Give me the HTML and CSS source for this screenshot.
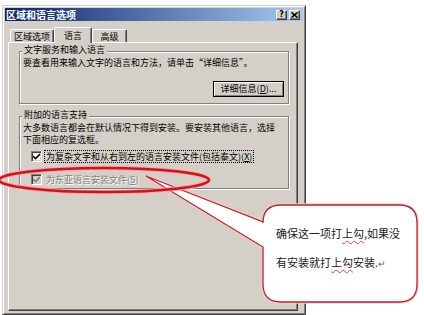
FILE: index.html
```html
<!DOCTYPE html>
<html lang="zh-CN">
<head>
    <meta charset="UTF-8">
    <title>区域和语言选项</title>
    <link rel="stylesheet" href="styles.css">
</head>
<body>
    <div class="dialog">
        <div class="titlebar">
            <span class="title">区域和语言选项</span>
            <div class="caption-btns">
                <span class="cap-btn">?</span>
                <span class="cap-btn">
                    <svg width="7" height="6" viewBox="0 0 7 6">
                        <path d="M0.5 0.5 L6.5 5.5 M6.5 0.5 L0.5 5.5" stroke="#000" stroke-width="1.6"/>
                    </svg>
                </span>
            </div>
        </div>

        <div class="tabs">
            <div class="tab">区域选项</div>
            <div class="tab active">语言</div>
            <div class="tab">高级</div>
        </div>

        <div class="panel">
            <div class="group group-services">
                <div class="group-title">文字服务和输入语言</div>
                <p class="desc">要查看用来输入文字的语言和方法，请单击“详细信息”。</p>
                <div class="btn-row">
                    <button class="btn">详细信息(<u>D</u>)...</button>
                </div>
            </div>

            <div class="group group-extra">
                <div class="group-title">附加的语言支持</div>
                <p class="desc">大多数语言都会在默认情况下得到安装。要安装其他语言，选择<br>下面相应的复选框。</p>
                <div class="check">
                    <span class="box">
                        <svg width="7" height="7" viewBox="0 0 7 7"><path d="M0 3 L2.5 5.5 L7 1" fill="none" stroke="#000" stroke-width="1.6"/></svg>
                    </span>
                    <span class="label focus">为复杂文字和从右到左的语言安装文件(包括泰文)(<u>X</u>)</span>
                </div>
                <div class="check disabled">
                    <span class="box">
                        <svg width="7" height="7" viewBox="0 0 7 7"><path d="M0 3 L2.5 5.5 L7 1" fill="none" stroke="#808080" stroke-width="1.6"/></svg>
                    </span>
                    <span class="label">为东亚语言安装文件(<u>S</u>)</span>
                </div>
            </div>
        </div>
    </div>

    <!-- red marks drawn on top of the screenshot -->
    <svg class="annotations" width="424" height="315" viewBox="0 0 424 315">
        <path class="callout-halo" d="M281 205 H399 Q417 205 417 223 V284 Q417 302 399 302 H281 Q263 302 263 284 V247 L146 176 L263 222 V223 Q263 205 281 205 Z"/>
        <path class="callout" d="M281 205 H399 Q417 205 417 223 V284 Q417 302 399 302 H281 Q263 302 263 284 V247 L146 176 L263 222 V223 Q263 205 281 205 Z"/>
        <ellipse class="ring-halo" cx="104" cy="180" rx="105" ry="12"/>
        <ellipse class="ring" cx="104" cy="180" rx="105" ry="12"/>
    </svg>
    <div class="callout-text">
        确保这一项打<span class="spell">上勾</span>,如果没<br>
        有安装就打<span class="spell">上勾</span>安装.<span class="ret">↵</span>
    </div>
</body>
</html>
```

FILE: styles.css
```css
* {
    box-sizing: border-box;
}

body {
    margin: 0;
    height: 315px;
    overflow: hidden;
    position: relative;
    background: #fff;
    font-family: "Noto Sans CJK SC", "Noto Sans", sans-serif;
    font-size: 9px;
    color: #000;
}

.dialog {
    margin: 5px 0 0 2px;
    width: 304px;
    height: 310px;
    padding: 2px;
    background: #d4d0c8;
    border: 1px solid;
    border-color: #d4d0c8 #404040 #404040 #d4d0c8;
    box-shadow: inset 1px 1px #fff, inset -1px -1px #808080;
}

.titlebar {
    height: 13px;
    display: flex;
    align-items: center;
    justify-content: space-between;
    padding: 0 3px 0 1px;
    background: linear-gradient(to right, #0a246a, #a6caf0);
    color: #fff;
    font-size: 10px;
    font-weight: bold;
    line-height: 13px;
}

.caption-btns {
    display: flex;
    gap: 2px;
}

.cap-btn {
    width: 11px;
    height: 10px;
    display: flex;
    align-items: center;
    justify-content: center;
    background: #d4d0c8;
    border: 1px solid;
    border-color: #fff #404040 #404040 #fff;
    box-shadow: inset -1px -1px #808080;
    color: #000;
    font-family: "DejaVu Sans", sans-serif;
    font-size: 8px;
    font-weight: bold;
    line-height: 8px;
}

.tabs {
    display: flex;
    align-items: flex-end;
    height: 21px;
    padding-left: 5px;
    position: relative;
    z-index: 1;
}

.tab {
    height: 13px;
    padding-top: 1px;
    text-align: center;
    line-height: 11px;
    background: #d4d0c8;
    border: 1px solid;
    border-bottom: none;
    border-color: #fff #404040 #404040 #fff;
    box-shadow: inset -1px 0 #808080;
    border-radius: 2px 2px 0 0;
}

.tab:nth-child(1) { width: 44px; }
.tab:nth-child(2) { width: 38px; }
.tab:nth-child(3) { width: 35px; }

.tab.active {
    height: 16px;
    margin-bottom: -1px;
    padding-top: 2px;
}

.panel {
    margin-left: 3px;
    width: 290px;
    height: 269px;
    padding: 8px 8px 0 10px;
    border: 1px solid;
    border-color: #fff #404040 #404040 #fff;
    box-shadow: inset -1px -1px #808080;
}

.group {
    border: 1px solid #808080;
    box-shadow: inset 1px 1px #fff, 1px 1px #fff;
    padding: 0 4px 6px 3px;
}

.group-title {
    display: table;
    margin: -8px 0 0 -1px;
    padding: 0 2px;
    background: #d4d0c8;
    line-height: 11px;
}

.desc {
    margin: 2px 0 0;
    line-height: 12px;
}

.btn-row {
    display: flex;
    justify-content: flex-end;
    margin-top: 12px;
}

.btn {
    width: 71px;
    height: 16px;
    padding: 0;
    background: #d4d0c8;
    border: 1px solid #000;
    box-shadow: inset 1px 1px #fff, inset -1px -1px #808080;
    font-family: inherit;
    font-size: 9px;
    line-height: 12px;
    color: #000;
}

.group-extra {
    margin-top: 12px;
    padding-bottom: 2px;
}

.check {
    display: flex;
    align-items: center;
    height: 13px;
    margin: 4px 0 0 8px;
}

.check.disabled {
    margin-top: 10px;
}

.box {
    width: 11px;
    height: 11px;
    display: flex;
    align-items: center;
    justify-content: center;
    background: #fff;
    border: 1px solid;
    border-color: #808080 #fff #fff #808080;
    box-shadow: inset 1px 1px #404040, inset -1px -1px #d4d0c8;
}

.check.disabled .box {
    background: #d4d0c8;
}

.label {
    margin-left: 3px;
    padding: 0 1px;
    line-height: 11px;
}

.label.focus {
    outline: 1px dotted #000;
}

.check.disabled .label {
    color: #808080;
    text-shadow: 1px 1px #fff;
}

.annotations {
    position: absolute;
    top: 0;
    left: 0;
    pointer-events: none;
}

.callout-halo {
    fill: none;
    stroke: #f4caca;
    stroke-width: 3.5;
}

.callout {
    fill: #fff;
    stroke: #b8262c;
    stroke-width: 1.3;
}

.ring-halo {
    fill: none;
    stroke: #f0a8a8;
    stroke-width: 4.5;
}

.ring {
    fill: none;
    stroke: #d4101a;
    stroke-width: 2.5;
}

.callout-text {
    position: absolute;
    left: 276px;
    top: 219px;
    font-size: 11px;
    line-height: 29px;
    color: #1a1a1a;
    white-space: nowrap;
}

.spell {
    text-decoration: underline wavy #e04040;
    text-decoration-thickness: 1px;
    text-underline-offset: 2px;
}

.ret {
    font-size: 9px;
    color: #666;
}
```
